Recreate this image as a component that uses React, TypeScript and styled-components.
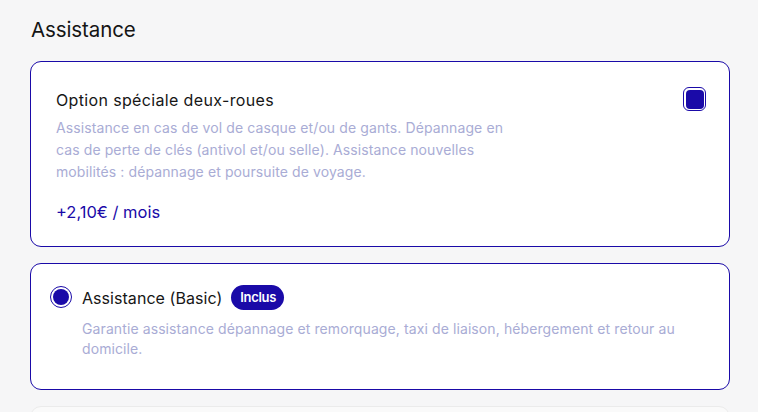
import React from "react";
import styled, { createGlobalStyle } from "styled-components";

const Global = createGlobalStyle`
  html, body { margin: 0; padding: 0; background: #f6f6f7; }
  body { font-family: Inter, Lato, sans-serif; }
`;

const BLUE = "#1a0aa8";

const Page = styled.div`
  padding: 18px 28px 0 30px;
  display: flex;
  flex-direction: column;
  height: 412px;
  box-sizing: border-box;
  overflow: hidden;
`;

const Heading = styled.h2`
  margin: 0 0 19px 1px;
  font-size: 20.5px;
  line-height: 24px;
  font-weight: 400;
  color: #141414;
  letter-spacing: -0.1px;
`;

const List = styled.div`
  display: flex;
  flex-direction: column;
  gap: 16px;
`;

const Card = styled.div<{ $muted?: boolean }>`
  background: ${(p) => (p.$muted ? "#fafafa" : "#ffffff")};
  border: 1px solid ${(p) => (p.$muted ? "#ebebeb" : BLUE)};
  border-radius: 11px;
  box-sizing: border-box;
  width: 700px;
`;

const OptionCard = styled(Card)`
  display: flex;
  justify-content: space-between;
  align-items: flex-start;
  padding: 27px 23px 23px 25px;
  height: 186px;
`;

const RadioCard = styled(Card)`
  display: flex;
  align-items: flex-start;
  gap: 10px;
  padding: 21px 40px 0 19px;
  height: 127px;
`;

const Body = styled.div`
  display: flex;
  flex-direction: column;
`;

const Title = styled.div<{ $tight?: boolean }>`
  font-size: 16px;
  line-height: 22px;
  color: #161616;
  letter-spacing: ${(p) => (p.$tight ? "0.05px" : "0.35px")};
`;

const Desc = styled.p<{ $lh?: number; $max?: number }>`
  margin: ${(p) => (p.$lh === 20 ? "9px" : "6px")} 0 0;
  font-size: 14px;
  line-height: ${(p) => p.$lh ?? 22}px;
  color: #a9acd5;
  letter-spacing: 0.1px;
  max-width: ${(p) => (p.$max ? `${p.$max}px` : "none")};
`;

const Price = styled.div`
  margin-top: 18px;
  font-size: 16.5px;
  line-height: 22px;
  color: ${BLUE};
`;

const Checkbox = styled.div`
  width: 23px;
  height: 24px;
  box-sizing: border-box;
  border: 1.5px solid ${BLUE};
  border-radius: 6px;
  padding: 1.5px;
  margin-top: -2px;
  flex-shrink: 0;
  &::after {
    content: "";
    display: block;
    width: 100%;
    height: 100%;
    background: ${BLUE};
    border-radius: 4px;
  }
`;

const Radio = styled.div`
  width: 22px;
  height: 22px;
  box-sizing: border-box;
  border: 1.5px solid ${BLUE};
  border-radius: 50%;
  padding: 2px;
  flex-shrink: 0;
  margin-top: 1px;
  &::after {
    content: "";
    display: block;
    width: 100%;
    height: 100%;
    background: ${BLUE};
    border-radius: 50%;
  }
`;

const TitleRow = styled.div`
  display: flex;
  align-items: center;
  gap: 9px;
  height: 25px;
`;

const Badge = styled.span`
  background: ${BLUE};
  color: #fff;
  font-weight: 600;
  font-size: 13px;
  line-height: 25px;
  height: 25px;
  padding: 0 8px 0 9px;
  border-radius: 13px;
  letter-spacing: -0.3px;
`;

export default function App() {
  return (
    <>
      <Global />
      <Page>
        <Heading>Assistance</Heading>
        <List>
          <OptionCard>
            <Body>
              <Title>Option spéciale deux-roues</Title>
              <Desc $max={450}>
                Assistance en cas de vol de casque et/ou de gants. Dépannage en
                cas de perte de clés (antivol et/ou selle). Assistance nouvelles
                mobilités : dépannage et poursuite de voyage.
              </Desc>
              <Price>+2,10€ / mois</Price>
            </Body>
            <Checkbox />
          </OptionCard>
          <RadioCard>
            <Radio />
            <Body>
              <TitleRow>
                <Title $tight>Assistance (Basic)</Title>
                <Badge>Inclus</Badge>
              </TitleRow>
              <Desc $lh={20} $max={615}>
                Garantie assistance dépannage et remorquage, taxi de liaison,
                hébergement et retour au domicile.
              </Desc>
            </Body>
          </RadioCard>
          <Card $muted style={{ height: 60 }} />
        </List>
      </Page>
    </>
  );
}
